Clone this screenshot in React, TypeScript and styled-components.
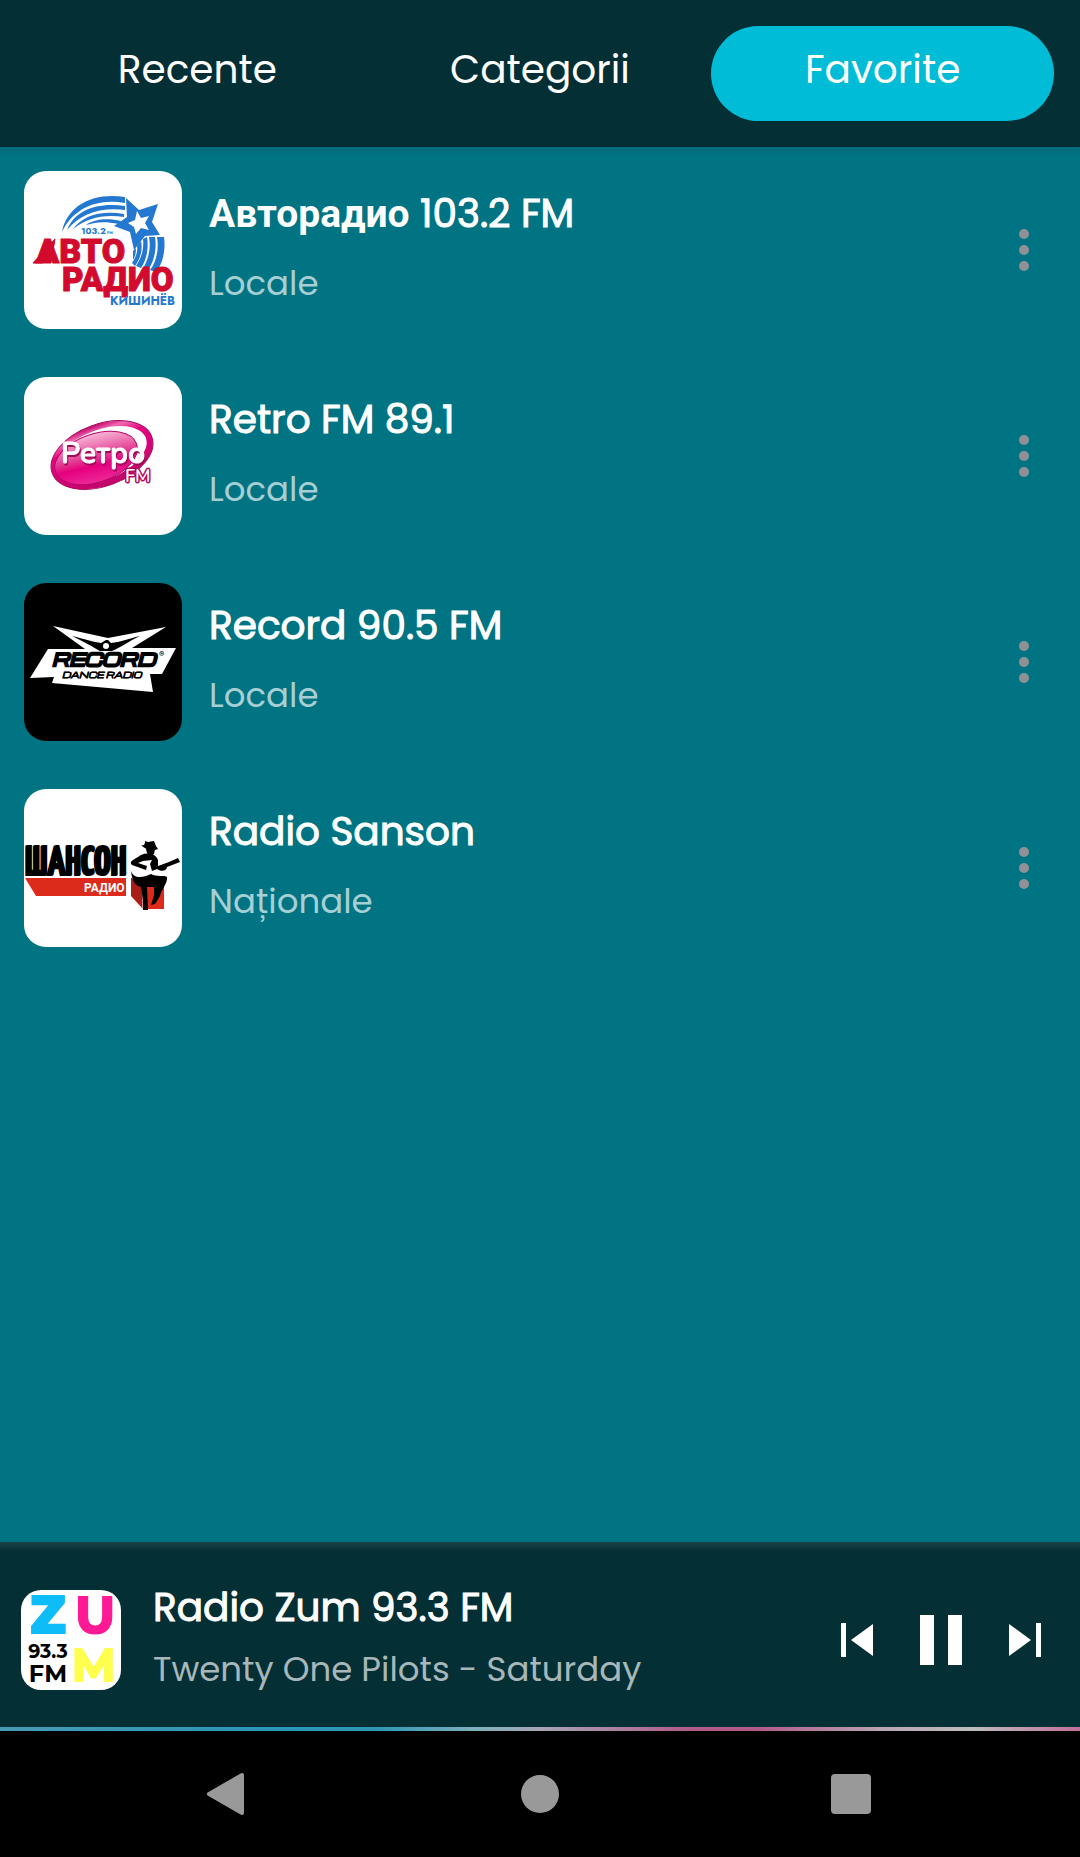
import React from "react";
import styled, { createGlobalStyle } from "styled-components";

const GlobalStyle = createGlobalStyle`
  * { box-sizing: border-box; }
  body { margin: 0; background: #007483; }
  button { border: 0; padding: 0; background: none; color: inherit; font: inherit; cursor: pointer; }
`;

const Screen = styled.div`
  display: flex;
  flex-direction: column;
  min-height: 100vh;
  color: #fff;
  font-family: Poppins, Inter, "Open Sans", sans-serif;
`;

const Tabs = styled.nav`
  display: grid;
  grid-template-columns: repeat(3, 1fr);
  padding: 26px;
  background: #042f35;
`;

const Tab = styled.button<{ $active?: boolean }>`
  && {
    height: 95px;
    padding-bottom: 8px;
    border-radius: 48px;
    background: ${(p) => (p.$active ? "#00bcd7" : "transparent")};
    font-size: 39px;
    line-height: 60px;
  }
`;

const Main = styled.main`
  flex: 1;
  background: linear-gradient(#006c7a, #007483 12px);
`;

const StationList = styled.ul`
  display: grid;
  gap: 48px;
  margin: 0;
  padding: 24px;
  list-style: none;
`;

const Station = styled.li`
  display: flex;
  align-items: center;
`;

const Cover = styled.svg<{ $size: number; $radius: number; $bg?: string }>`
  flex: none;
  display: block;
  width: ${(p) => p.$size}px;
  height: ${(p) => p.$size}px;
  border-radius: ${(p) => p.$radius}px;
  background: ${(p) => p.$bg ?? "#fff"};
`;

const Info = styled.div<{ $gap: number; $indent: number }>`
  flex: 1;
  min-width: 0;
  display: grid;
  gap: ${(p) => p.$gap}px;
  padding: 0 0 9px ${(p) => p.$indent}px;
`;

const Title = styled.h2`
  margin: 0;
  font-size: 39px;
  font-weight: 400;
  line-height: 60px;
  white-space: nowrap;
  -webkit-text-stroke: 1px currentColor;
`;

const Cyrillic = styled.span`
  font-family: Roboto, sans-serif;
  font-weight: 700;
  -webkit-text-stroke: 0;
`;

const Subtitle = styled.p`
  margin: 0;
  color: rgba(255, 255, 255, 0.66);
  font-size: 34px;
  line-height: 48px;
  white-space: nowrap;
`;

const MoreButton = styled.button`
  display: grid;
  place-items: center;
  width: 64px;
  height: 96px;
`;

const Player = styled.footer`
  display: flex;
  align-items: center;
  height: 185px;
  padding: 11px 13px 0 21px;
  background: linear-gradient(#1b424a, #042f35 9px);
`;

const Controls = styled.div`
  display: grid;
  grid-template-columns: repeat(3, 84px);
  justify-items: center;
  align-items: center;
`;

const ControlButton = styled.button`
  display: grid;
  place-items: center;
  width: 72px;
  height: 72px;
`;

const Spectrum = styled.div`
  height: 4px;
  background: linear-gradient(90deg, #469bb5, #2b95b7 25%, #2f97b5 35%, #7fb0bb 44%, #a6a6b5 50%, #b05a8a 64%, #b05a8a 70%, #b9a6b3 82%, #bdbdbd 90%, #c0709a);
`;

const SystemBar = styled.nav`
  display: grid;
  grid-template-columns: repeat(3, 1fr);
  height: 126px;
  padding: 0 73px;
  background: #000;
`;

const SystemButton = styled.button`
  display: grid;
  place-items: center;
`;

function AutoradioLogo() {
  return (
    <Cover viewBox="0 0 158 158" $size={158} $radius={22} role="img" aria-label="Авторадио">
      <g fill="#2478cf">
        <path d="M38 61C43 34 70 21 101 26V32C72 27 49 38 38 61Z" />
        <path d="M43 59C51 39 73 31 101 35V39C76 36 56 43 43 59Z" />
        <path d="M49 58C59 44 78 39 100 43V46C80 43 63 47 49 58Z" />
        <path d="M62 54C70 48 84 47 97 50L95 53C80 50 72 51 62 54Z" />
        <path d="M133 66H140C142 80 138 94 132 101L126 99C133 90 135 77 133 66Z" />
        <path d="M125 66H131C133 78 130 91 124 99L119 97C125 88 127 76 125 66Z" />
        <path d="M119 68L123 66C125 78 122 90 117 97L112 95C118 86 120 77 119 68Z" />
        <path d="M113 75L117 70C119 79 116 88 111 95L108 92C112 86 114 80 113 75Z" />
        <path d="M109 80L112 77C112 82 111 86 109 89Z" />
      </g>
      <path d="M102 27L115 39L134 33L128 51L136 64L121 65L110 79L106 61L90 55L103 46Z" fill="#2478cf" />
      <path d="M113 40L117 47L125 45L121 52L125 59L117 57L112 63L110 56L104 52L111 49Z" fill="#fff" />
      <g fontFamily="Roboto, sans-serif" fontWeight="900" fill="#d20a2e" stroke="#d20a2e">
        <text x="12" y="92" fontSize="34">АВТО</text>
        <path d="M9 92L31 68L27 92Z" />
        <text x="38" y="120" fontSize="33">РАДИО</text>
      </g>
      <g fontFamily="Jost, Roboto, sans-serif" fontWeight="700" fill="#2478cf">
        <text x="57" y="63" fontSize="9">103.2</text>
        <text x="83" y="63" fontSize="4">FM</text>
        <text x="86" y="134" fontSize="12">КИШИНЁВ</text>
      </g>
    </Cover>
  );
}

const RetroWord = styled.text`
  filter: drop-shadow(1px 2px 0 #9f0a58);
`;

function RetroLogo() {
  return (
    <Cover viewBox="0 0 158 158" $size={158} $radius={22} role="img" aria-label="Ретро FM">
      <defs>
        <linearGradient id="retro-rim" x1="0" y1="0" x2="0" y2="1">
          <stop offset="0" stopColor="#c3056c" />
          <stop offset="0.12" stopColor="#f06bb0" />
          <stop offset="0.3" stopColor="#e4047f" />
          <stop offset="1" stopColor="#c3056c" />
        </linearGradient>
        <linearGradient id="retro-core" x1="0.6" y1="0" x2="0.4" y2="1">
          <stop offset="0" stopColor="#f7b8d8" />
          <stop offset="0.5" stopColor="#e2348f" />
          <stop offset="0.65" stopColor="#e4007d" />
          <stop offset="1" stopColor="#ee2a9a" />
        </linearGradient>
      </defs>
      <ellipse cx="78" cy="78" rx="53" ry="31" transform="rotate(-20 78 78)" fill="url(#retro-rim)" stroke="#a8085c" />
      <ellipse cx="77" cy="78" rx="48" ry="25" transform="rotate(-21 77 78)" fill="#fff" />
      <ellipse cx="72" cy="81" rx="43" ry="24" transform="rotate(-19 72 81)" fill="url(#retro-core)" stroke="#b8076a" />
      <g fontFamily="Nunito, Inter, sans-serif" fontWeight="600" fill="#fff">
        <RetroWord x="37" y="86" fontSize="30" stroke="#fff">Ретро</RetroWord>
        <text x="101" y="105" fontSize="18" stroke="#b0075f" strokeWidth="3" paintOrder="stroke">FM</text>
      </g>
    </Cover>
  );
}

function RecordLogo() {
  return (
    <Cover viewBox="0 0 158 158" $size={158} $radius={22} $bg="#000" role="img" aria-label="Record Dance Radio">
      <path d="M29 43L84 55L142 44L108 65H152L138 91H126L129 109L28 100L30 94L6 95L24 66H61Z" fill="#fff" />
      <path d="M48 53C60 56 70 59 77 60L82 57H84L87 60C96 59 104 56 116 53C105 58 96 65 88 68H76C69 64 59 58 48 53Z" fill="#000" />
      <circle cx="82" cy="63" r="3" fill="#fff" />
      <g fontFamily="Michroma, DejaVu Sans, sans-serif" fontWeight="700" fontStyle="italic" stroke="#000">
        <text x="28" y="83" fontSize="17" strokeWidth="2">RECORD</text>
        <text x="38" y="95" fontSize="8" strokeWidth="0.5">DANCE RADIO</text>
      </g>
      <text x="135" y="74" fontFamily="Inter, sans-serif" fontSize="8" fontWeight="700">®</text>
    </Cover>
  );
}

function ShansonLogo() {
  return (
    <Cover viewBox="0 0 158 158" $size={158} $radius={22} role="img" aria-label="Шансон радио">
      <text x="1" y="86" fontFamily="Yanone Kaffeesatz, Roboto, sans-serif" fontSize="41" fontWeight="700" stroke="#000" strokeWidth="2">ШАНСОН</text>
      <path d="M1 89H102V107H12Z" fill="#dc2a1b" />
      <text x="60" y="103" fontFamily="Roboto, sans-serif" fontSize="12" fontWeight="700" fill="#fff">РАДИО</text>
      <path d="M107 88L119 97V120L107 107Z" fill="#a91f17" />
      <path d="M107 88L118 90H140V120H119V97Z" fill="#dc2a1b" />
      <path d="M107 88L119 97V120" fill="none" stroke="#fff" />
      <path d="M117 56C120 57 121 56 121 52L124 53L130 52L132 57L134 60C128 63 122 61 117 56Z" />
      <path d="M122 60H131L130 65L126 68L123 64Z" />
      <path d="M117 66C124 63 132 65 134 71L134 77L145 73L154 69L156 73L143 78C143 82 137 83 133 80L128 82L126 75L128 71L119 72L114 74L123 77L122 81L108 76C106 74 107 72 109 71Z" />
      <path d="M107 82C110 90 118 89 127 85C132 88 141 86 143 88C144 94 137 101 136 107L131 115L127 116L130 106L130 98L123 98L124 121H119V111L117 98C109 96 108 89 107 82Z" />
    </Cover>
  );
}

function ZumLogo() {
  return (
    <Cover viewBox="0 0 100 100" $size={100} $radius={20} role="img" aria-label="ZUM 93.3 FM">
      <g fontFamily="Montserrat, Inter, sans-serif" fontWeight="700" textAnchor="middle">
        <text x="27" y="43" fontSize="52" fontWeight="800" fill="#0ebcf8" stroke="#0ebcf8" strokeWidth="2">Z</text>
        <text x="74" y="43" fontSize="51" fill="#ff1994" stroke="#ff1994" strokeWidth="2">U</text>
        <text x="73" y="91" fontSize="46" fill="#ffff4d" stroke="#ffff4d" strokeWidth="2">M</text>
        <text x="27" y="68" fontSize="19">93.3</text>
        <text x="27" y="92" fontSize="24">FM</text>
      </g>
    </Cover>
  );
}

const stations = [
  { id: "autoradio", prefix: "Авторадио", name: " 103.2 FM", group: "Locale", Logo: AutoradioLogo },
  { id: "retro", name: "Retro FM 89.1", group: "Locale", Logo: RetroLogo },
  { id: "record", name: "Record 90.5 FM", group: "Locale", Logo: RecordLogo },
  { id: "sanson", name: "Radio Sanson", group: "Naționale", Logo: ShansonLogo },
];

export default function App() {
  return (
    <Screen>
      <GlobalStyle />
      <Tabs>
        <Tab type="button">Recente</Tab>
        <Tab type="button">Categorii</Tab>
        <Tab type="button" $active aria-current="page">Favorite</Tab>
      </Tabs>
      <Main>
        <StationList>
          {stations.map(({ id, prefix, name, group, Logo }) => (
            <Station key={id}>
              <Logo />
              <Info $gap={15} $indent={27}>
                <Title>
                  {prefix && <Cyrillic>{prefix}</Cyrillic>}
                  {name}
                </Title>
                <Subtitle>{group}</Subtitle>
              </Info>
              <MoreButton type="button" aria-label="Opțiuni">
                <svg width="12" height="44" viewBox="0 0 12 44" fill="#8f9197">
                  <circle cx="6" cy="6" r="5" />
                  <circle cx="6" cy="22" r="5" />
                  <circle cx="6" cy="38" r="5" />
                </svg>
              </MoreButton>
            </Station>
          ))}
        </StationList>
      </Main>
      <Player>
        <ZumLogo />
        <Info $gap={7} $indent={32}>
          <Title>Radio Zum 93.3 FM</Title>
          <Subtitle>Twenty One Pilots - Saturday</Subtitle>
        </Info>
        <Controls>
          <ControlButton type="button" aria-label="Înapoi">
            <svg width="34" height="34" viewBox="0 0 34 34" fill="#fff">
              <path d="M1 0H6V34H1ZM33 1V33L11 17Z" />
            </svg>
          </ControlButton>
          <ControlButton type="button" aria-label="Pauză">
            <svg width="44" height="50" viewBox="0 0 44 50" fill="#fff">
              <path d="M1 0H15V50H1ZM29 0H43V50H29Z" />
            </svg>
          </ControlButton>
          <ControlButton type="button" aria-label="Înainte">
            <svg width="34" height="34" viewBox="0 0 34 34" fill="#fff">
              <path d="M28 0H33V34H28ZM1 1V33L23 17Z" />
            </svg>
          </ControlButton>
        </Controls>
      </Player>
      <Spectrum />
      <SystemBar>
        <SystemButton type="button" aria-label="Back">
          <svg width="44" height="44" viewBox="0 0 44 44" fill="#999" stroke="#999" strokeWidth="4" strokeLinejoin="round">
            <path d="M2 22L35 3V41Z" />
          </svg>
        </SystemButton>
        <SystemButton type="button" aria-label="Home">
          <svg width="40" height="40" viewBox="0 0 40 40" fill="#999">
            <circle cx="20" cy="20" r="19" />
          </svg>
        </SystemButton>
        <SystemButton type="button" aria-label="Recents">
          <svg width="40" height="40" viewBox="0 0 40 40" fill="#999">
            <rect width="40" height="40" rx="4" />
          </svg>
        </SystemButton>
      </SystemBar>
    </Screen>
  );
}
